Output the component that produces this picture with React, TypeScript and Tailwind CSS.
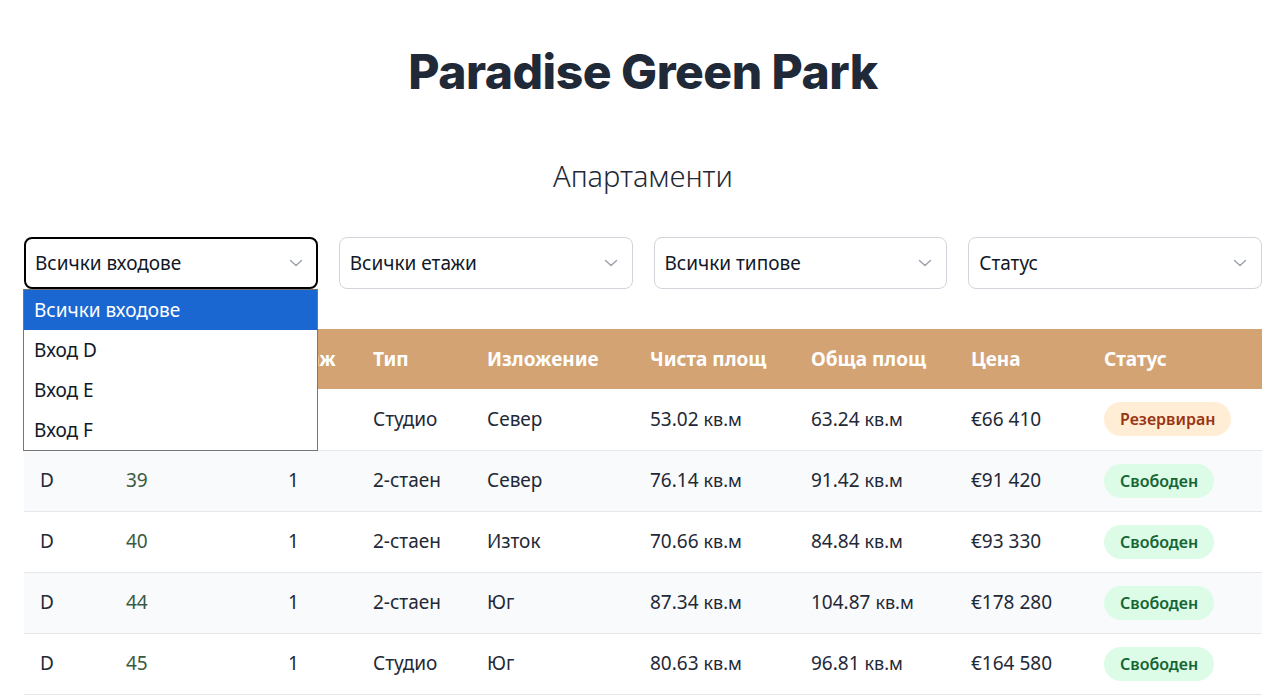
import React from "react";

const rows = [
  { e: "D", n: "", f: "", t: "Студио", o: "Север", net: "53.02", tot: "63.24", p: "€66 410", s: "r" },
  { e: "D", n: "39", f: "1", t: "2-стаен", o: "Север", net: "76.14", tot: "91.42", p: "€91 420", s: "f" },
  { e: "D", n: "40", f: "1", t: "2-стаен", o: "Изток", net: "70.66", tot: "84.84", p: "€93 330", s: "f" },
  { e: "D", n: "44", f: "1", t: "2-стаен", o: "Юг", net: "87.34", tot: "104.87", p: "€178 280", s: "f" },
  { e: "D", n: "45", f: "1", t: "Студио", o: "Юг", net: "80.63", tot: "96.81", p: "€164 580", s: "f" },
];

function Chevron() {
  return (
    <svg width="16" height="16" viewBox="0 0 16 16" fill="none" stroke="#9ca3af" strokeWidth="1.5" strokeLinecap="round" strokeLinejoin="round">
      <path d="M2.5 5.5 8 10.5l5.5-5" />
    </svg>
  );
}

function Select({ label, focused }: { label: string; focused?: boolean }) {
  return (
    <div
      className={
        "flex h-[52px] items-center justify-between rounded-lg bg-white text-[19px] text-[#111827] " +
        (focused ? "border-2 border-black pl-[9px] pr-[12px]" : "border border-[#d1d5db] pl-[10px] pr-[13px]")
      }
    >
      <span>{label}</span>
      <Chevron />
    </div>
  );
}

export default function App() {
  const cols = ["w-[86px]", "w-[162px]", "w-[85px]", "w-[114px]", "w-[163px]", "w-[161px]", "w-[160px]", "w-[133px]", "w-[174px]"];
  return (
    <div className="h-[696px] w-[1262px] overflow-hidden bg-white">
      <div className="w-[1286px] px-[24px] text-[#1f2937]" style={{ fontFamily: '"Noto Sans", "Open Sans", sans-serif' }}>
        <h1
          className="pt-[40px] text-center text-[48px] font-extrabold leading-[64px] tracking-[-0.5px] text-[#1f2937]"
          style={{ fontFamily: 'Inter, "Noto Sans", sans-serif' }}
        >
          Paradise Green Park
        </h1>
        <h2 className="mt-[54px] text-center text-[29px] font-light leading-[36px] text-[#1f2937]">Апартаменти</h2>

        <div className="mt-[43px]">
          <div className="relative grid grid-cols-4 gap-[21px]">
            <Select label="Всички входове" focused />
            <Select label="Всички етажи" />
            <Select label="Всички типове" />
            <Select label="Статус" />
            <div className="absolute left-[-1px] top-[52px] z-10 w-[295px] border border-[#767676] bg-white text-[19px] text-[#111827]">
              <div className="flex h-[40px] items-center bg-[#1a67d2] pl-[10px] text-white">Всички входове</div>
              <div className="flex h-[40px] items-center pl-[10px]">Вход D</div>
              <div className="flex h-[40px] items-center pl-[10px]">Вход E</div>
              <div className="flex h-[40px] items-center pl-[10px]">Вход F</div>
            </div>
          </div>

          <table className="mt-[40px] w-[1238px] table-fixed border-collapse text-left text-[19px]">
            <thead>
              <tr className="h-[60px] bg-[#d4a373] text-white">
                {["Вход", "Номер", "Етаж", "Тип", "Изложение", "Чиста площ", "Обща площ", "Цена", "Статус"].map((h, i) => (
                  <th key={h} className={cols[i] + " px-[16px] font-bold"}>
                    {h}
                  </th>
                ))}
              </tr>
            </thead>
            <tbody>
              {rows.map((r, i) => (
                <tr key={i} className={"h-[61px] border-b border-[#e5e7eb] " + (i % 2 === 1 ? "bg-[#f9fafb]" : "bg-white")}>
                  <td className="px-[16px]">{r.e}</td>
                  <td className="px-[16px] text-[#3a5a40]">{r.n}</td>
                  <td className="px-[16px]">{r.f}</td>
                  <td className="px-[16px]">{r.t}</td>
                  <td className="px-[16px]">{r.o}</td>
                  <td className="px-[16px]">
                    {r.net} <span className="text-[18px]">кв.м</span>
                  </td>
                  <td className="px-[16px]">
                    {r.tot} <span className="text-[18px]">кв.м</span>
                  </td>
                  <td className="px-[16px]">{r.p}</td>
                  <td className="px-[16px]">
                    {r.s === "r" ? (
                      <span className="inline-flex h-[34px] items-center rounded-full bg-[#ffedd5] px-[16px] text-[16px] font-semibold text-[#9a3412]">
                        Резервиран
                      </span>
                    ) : (
                      <span className="inline-flex h-[34px] items-center rounded-full bg-[#dcfce7] px-[16px] text-[16px] font-semibold text-[#166534]">
                        Свободен
                      </span>
                    )}
                  </td>
                </tr>
              ))}
            </tbody>
          </table>
        </div>
      </div>
    </div>
  );
}
